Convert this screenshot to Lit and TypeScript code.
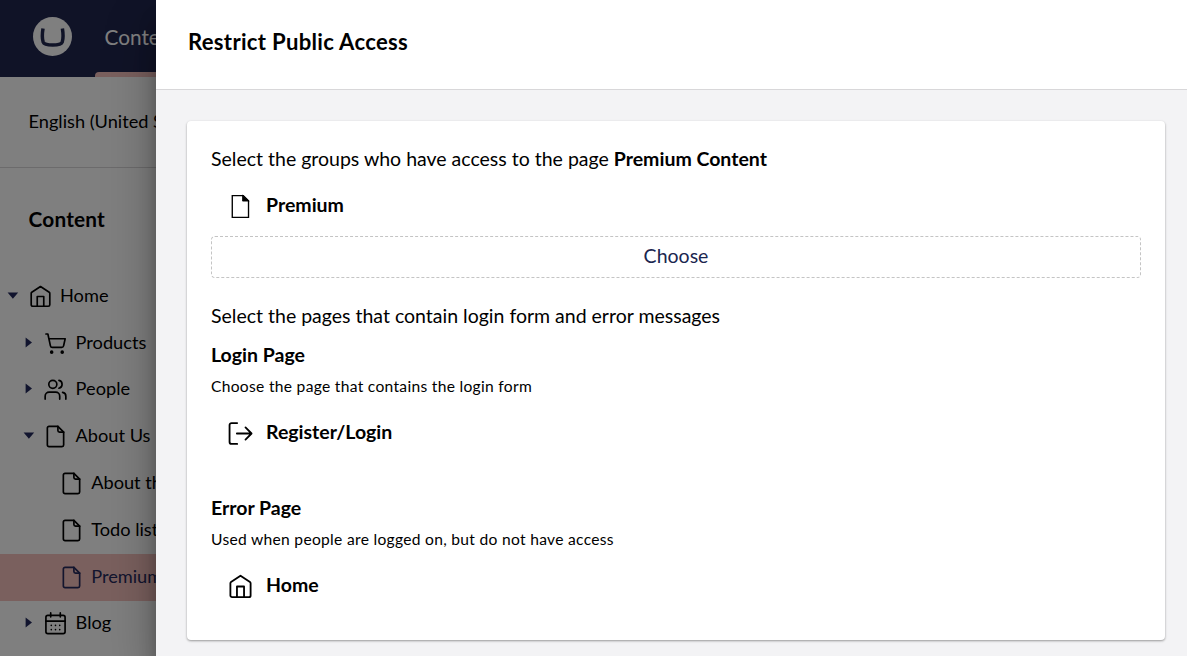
import { LitElement, html, css, svg } from "lit";
import { customElement, property } from "lit/decorators.js";

const icons: Record<string, unknown> = {
  home: svg`<path d="M12 1.6 2.9 7.6a1.4 1.4 0 0 0-.6 1.2V20.6a1.6 1.6 0 0 0 1.6 1.6H20.1a1.6 1.6 0 0 0 1.6-1.6V8.8a1.4 1.4 0 0 0-.6-1.2Z"/><path d="M8.6 22V12h6.8v10"/>`,
  cart: svg`<circle cx="8" cy="21" r="1"/><circle cx="19" cy="21" r="1"/><path d="M2.05 2.05h2l2.66 12.42a2 2 0 0 0 2 1.58h9.78a2 2 0 0 0 1.95-1.57l1.65-7.43H5.12"/>`,
  users: svg`<path d="M1.2 22v-3a4.2 4.2 0 0 1 4.2-4.2h6.8a4.2 4.2 0 0 1 4.2 4.2v3"/><circle cx="9.2" cy="6.6" r="4.2"/><path d="M22.8 22v-3a4 4 0 0 0-3.4-4"/><path d="M15.6 2.5a4.2 4.2 0 0 1 0 8.2"/>`,
  document: svg`<path d="M14.5 1.5H5.2A1.7 1.7 0 0 0 3.5 3.2v17.6a1.7 1.7 0 0 0 1.7 1.7h13.6a1.7 1.7 0 0 0 1.7-1.7V7.5Z"/><path d="M14.5 1.5v4.3a1.7 1.7 0 0 0 1.7 1.7h4.3"/>`,
  calendar: svg`<rect x="2" y="3.5" width="20" height="19" rx="2"/><path d="M7 1v4M17 1v4M2 9.6h20"/><path d="M7.6 14h.01M12 14h.01M16.4 14h.01M7.6 18.4h.01M12 18.4h.01M16.4 18.4h.01" stroke-width="1.7"/>`,
  exit: svg`<path d="M8.8 2H3.4A1.9 1.9 0 0 0 1.5 3.9v16.2A1.9 1.9 0 0 0 3.4 22h5.4"/><path d="M8.5 12h14M16.8 6.2 22.6 12l-5.8 5.8"/>`,
  sheet: svg`<path d="M4.1 1.6h10.6l5 5v15.8H4.1Z" stroke-linejoin="miter" stroke-width="1.3"/><path d="M14 1.4v5.4h5.9Z" fill="currentColor" stroke-width=".8"/>`,
};

@customElement("app-icon")
class AppIcon extends LitElement {
  @property() name = "document";
  static styles = css`
    :host { display: block; width: 23px; height: 23px; flex: none; }
    .glyph { display: block; width: 100%; height: 100%; fill: none; stroke: currentColor; stroke-width: 1.75; stroke-linecap: round; stroke-linejoin: round; overflow: visible; }
  `;
  render() {
    return html`<svg class="glyph" viewBox="0 0 24 24">${icons[this.name]}</svg>`;
  }
}

interface TreeNode { label: string; icon: string; depth: number; caret?: "open" | "closed"; active?: boolean; }

const nodes: TreeNode[] = [
  { label: "Home", icon: "home", depth: 0, caret: "open" },
  { label: "Products", icon: "cart", depth: 1, caret: "closed" },
  { label: "People", icon: "users", depth: 1, caret: "closed" },
  { label: "About Us", icon: "document", depth: 1, caret: "open" },
  { label: "About this Starter Kit", icon: "document", depth: 2 },
  { label: "Todo list for the Starter Kit", icon: "document", depth: 2 },
  { label: "Premium Content", icon: "document", depth: 2, active: true },
  { label: "Blog", icon: "calendar", depth: 1, caret: "closed" },
];

@customElement("app-sidebar")
class AppSidebar extends LitElement {
  static styles = css`
    :host { display: block; position: relative; overflow: hidden; white-space: nowrap; background: #fff; color: #000; }
    :host::after { content: ""; position: absolute; inset: 0; background: rgba(0, 0, 0, 0.5); }
    .top { display: flex; height: 77px; background: #20264f; color: #fff; }
    .logo { width: 39px; height: 39px; margin: 17px 23px 0 33px; flex: none; }
    .tab { display: flex; flex-direction: column; justify-content: space-between; flex: none; width: 90px; font-size: 20.8px; line-height: 74px; }
    .tab-text { height: 72px; padding-left: 9.5px; }
    .bar { height: 5px; background: #f5c1bc; border-radius: 4px 4px 0 0; }
    .lang { height: 90px; line-height: 89px; padding-left: 28.5px; font-size: 18.2px; border-bottom: 1px solid #d8d7d9; }
    .heading { height: 105px; line-height: 102px; padding-left: 28.5px; font-size: 20.8px; font-weight: 700; letter-spacing: 0.2px; }
    .row { display: flex; align-items: center; height: 46.8px; font-size: 18.2px; }
    .d1 { padding-left: 15.6px; }
    .d2 { padding-left: 31.2px; }
    .active { background: #f5c1bc; color: #262a5c; }
    .caret { width: 28.5px; flex: none; display: flex; color: #22285c; }
    .caret svg { margin: -1px 0 0 7px; width: 12px; height: 12px; fill: currentColor; }
    .label { margin: -3px 0 0 8.5px; }
  `;
  render() {
    return html`
      <div class="top">
        <svg class="logo" viewBox="0 0 39 39"><circle cx="19.5" cy="19.5" r="19.5" fill="#fff"/><path d="M10 11.5C9.1 17 9.1 21.5 10.1 24.8c1 2.8 4.4 3.2 9.6 3.2s8.6-.4 9.6-3.2c1-3.3 1-7.8.1-13.3" fill="none" stroke="#20264f" stroke-width="3.5"/></svg>
        <div class="tab"><div class="tab-text">Content</div><div class="bar"></div></div>
      </div>
      <div class="lang">English (United States)</div>
      <div class="heading">Content</div>
      ${nodes.map((n) => html`<div class="row d${n.depth} ${n.active ? "active" : ""}">
        <span class="caret">${n.caret
          ? html`<svg viewBox="0 0 12 12"><path d=${n.caret === "open" ? "M.6 2.5h10.6L5.9 8.8Z" : "M2.6.5v10l6.4-5Z"}/></svg>`
          : ""}</span>
        <app-icon name=${n.icon}></app-icon><span class="label">${n.label}</span>
      </div>`)}
    `;
  }
}

@customElement("app-reference")
class AppReference extends LitElement {
  @property() icon = "document";
  @property() label = "";
  static styles = css`
    :host { display: flex; align-items: center; gap: 14px; height: 48px; padding-left: 16.5px; font-weight: 700; font-size: 19.5px; }
    .icon { width: 25px; height: 25px; }
    .label { margin: -4px 0 0 -0.5px; }
  `;
  render() {
    return html`<app-icon class="icon" name=${this.icon}></app-icon><span class="label">${this.label}</span>`;
  }
}

@customElement("app-root")
class AppRoot extends LitElement {
  static styles = css`
    :host { display: grid; grid-template-columns: 156px 1fr; height: 656px; overflow: hidden; font-family: Lato, sans-serif; color: #000; }
    .modal { position: relative; z-index: 1; background: #f3f3f5; box-shadow: 0 25px 49px rgba(0, 0, 0, 0.3), 0 20px 16px rgba(0, 0, 0, 0.22); }
    .title { height: 89px; line-height: 84px; padding-left: 32px; font-size: 22.1px; letter-spacing: 0.3px; font-weight: 700; background: #fff; border-bottom: 1px solid #d8d7d9; }
    .box { margin: 31px 22px 0 31px; height: 496px; padding: 23px 24px 0; background: #fff; border-radius: 4px; box-shadow: 0 1px 3px rgba(0, 0, 0, 0.16), 0 1px 2px rgba(0, 0, 0, 0.24); }
    .text { font-size: 19.5px; line-height: 30px; }
    .strong { font-weight: 700; }
    .small { font-size: 15.6px; letter-spacing: 0.3px; line-height: 25px; margin-top: 4px; }
    .choose { display: flex; width: 100%; height: 42px; box-sizing: border-box; align-items: center; justify-content: center; margin: 6px 0 23px; padding: 0 0 4px; border: 1px dashed #c4c4c4; border-radius: 4px; background: none; color: #1b264f; font: 19.5px Lato, sans-serif; }
    .group { margin-top: 8px; }
    .page { margin-top: 9px; }
    .login { margin-top: 10px; }
    .error { margin-top: 36px; }
  `;
  render() {
    return html`
      <app-sidebar></app-sidebar>
      <main class="modal">
        <div class="title">Restrict Public Access</div>
        <section class="box">
          <div class="text">Select the groups who have access to the page <span class="strong">Premium Content</span></div>
          <app-reference class="group" icon="sheet" label="Premium"></app-reference>
          <button class="choose">Choose</button>
          <div class="text">Select the pages that contain login form and error messages</div>
          <div class="text strong page">Login Page</div>
          <div class="small">Choose the page that contains the login form</div>
          <app-reference class="login" icon="exit" label="Register/Login"></app-reference>
          <div class="text strong error">Error Page</div>
          <div class="small">Used when people are logged on, but do not have access</div>
          <app-reference class="login" icon="home" label="Home"></app-reference>
        </section>
      </main>
    `;
  }
}
